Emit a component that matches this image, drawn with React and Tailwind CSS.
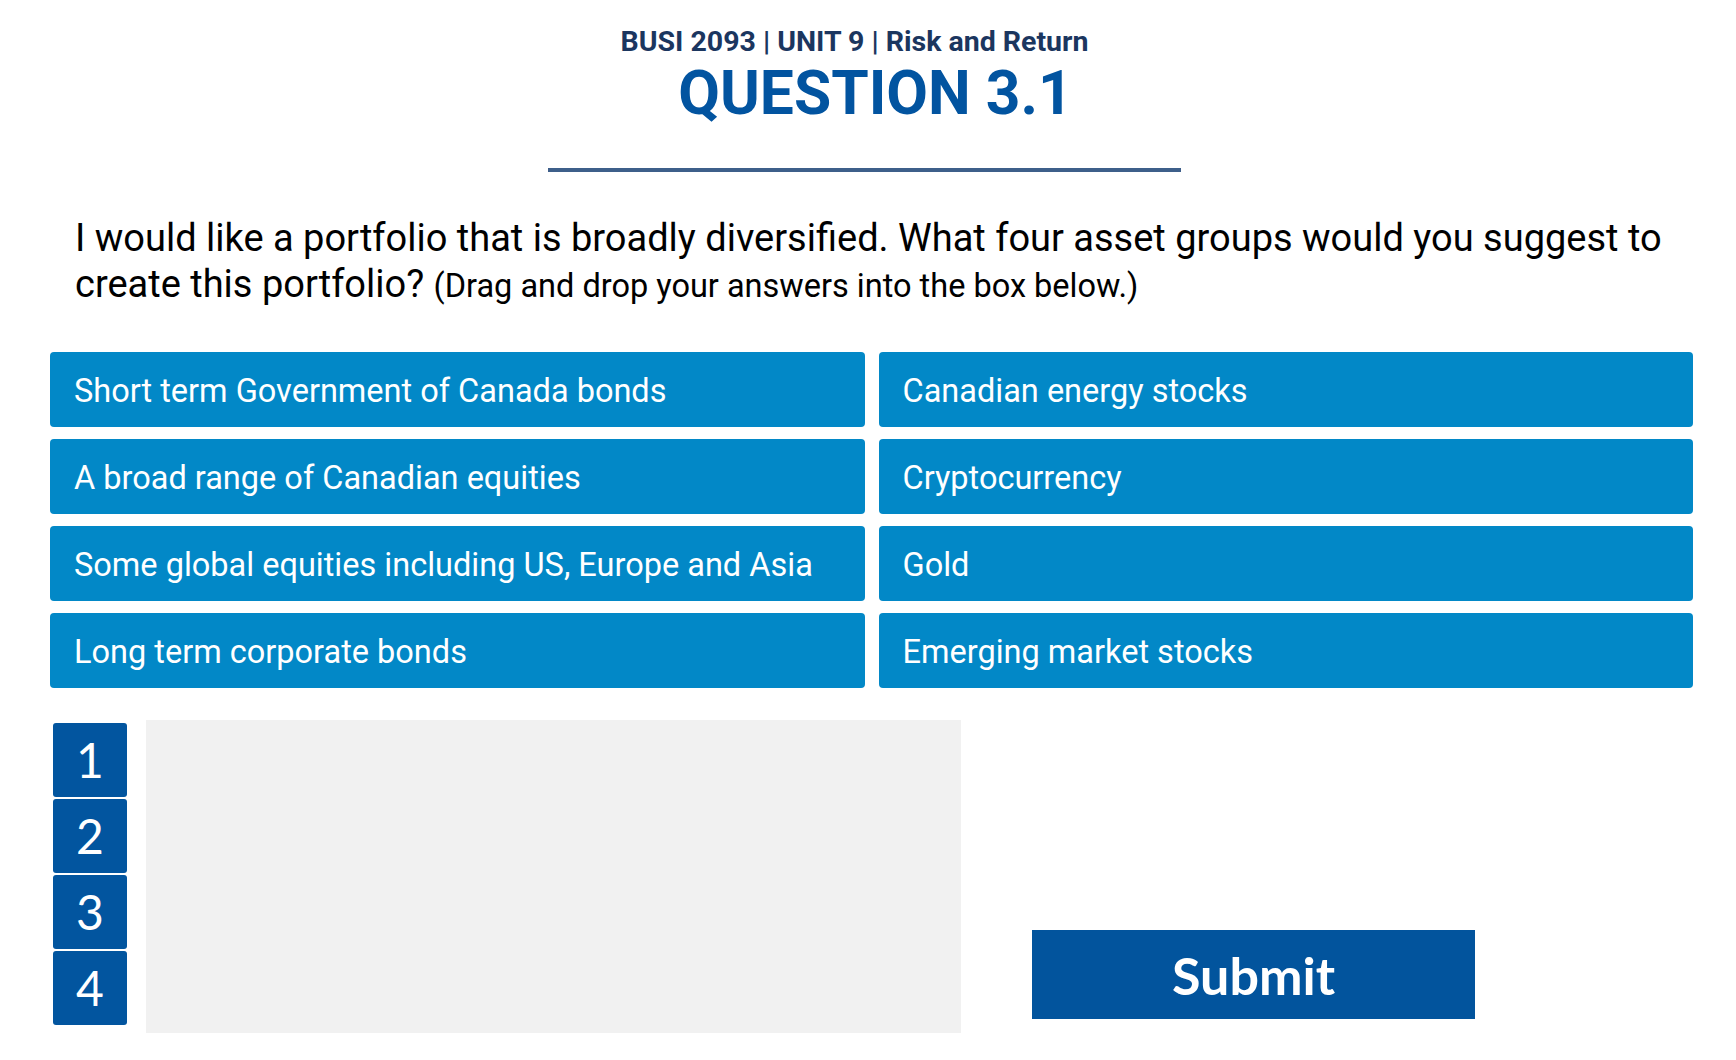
const answers = [
  'Short term Government of Canada bonds',
  'Canadian energy stocks',
  'A broad range of Canadian equities',
  'Cryptocurrency',
  'Some global equities including US, Europe and Asia',
  'Gold',
  'Long term corporate bonds',
  'Emerging market stocks',
]

export default function App() {
  return (
    <div className="bg-white min-h-screen w-[1736px] pl-[50px] pr-[43px]" style={{ fontFamily: 'Roboto, "Liberation Sans", sans-serif' }}>
      {/* Header */}
      <header className="flex flex-col items-center pt-[26px]">
        <div className="mr-[34px] text-[28.5px] leading-[32px] font-bold text-[#1b365f]">
          BUSI 2093 | UNIT 9 | Risk and Return
        </div>
        <h1 className="mt-[5px] ml-[8px] text-[60.5px] leading-[62px] font-bold text-[#0254a0]">
          QUESTION 3.1
        </h1>
        <div className="mt-[43px] mr-[14px] w-[633px] h-[4px] bg-[#3e5f8a]" />
      </header>

      {/* Question */}
      <p className="mt-[43px] ml-[25px] text-[38px] leading-[46px] text-black">
        I would like a portfolio that is broadly diversified. What four asset groups would you suggest to create this portfolio?{' '}
        <span className="text-[32.5px]">(Drag and drop your answers into the box below.)</span>
      </p>

      {/* Answer tiles */}
      <div className="mt-[43px] grid grid-cols-2 gap-x-[14px] gap-y-[12px]">
        {answers.map((a) => (
          <div key={a} className="h-[75px] flex items-center pl-[24px] pt-[4px] bg-[#0288c7] rounded-[4px] text-white text-[32.5px]">
            {a}
          </div>
        ))}
      </div>

      {/* Drop zone + submit */}
      <div className="mt-[32px] flex items-end">
        <div className="flex items-start">
          <div className="mt-[3px] ml-[3px] flex flex-col gap-[2px]" style={{ fontFamily: 'Lato, "Liberation Sans", sans-serif' }}>
            {[1, 2, 3, 4].map((n) => (
              <div key={n} className="w-[74px] h-[74px] flex items-center justify-center bg-[#02559f] rounded-[3px] text-white text-[48px]">
                {n}
              </div>
            ))}
          </div>
          <div className="ml-[19px] w-[815px] h-[313px] bg-[#f1f1f1]" />
        </div>
        <button
          className="ml-[71px] mb-[14px] w-[443px] h-[89px] flex items-center justify-center bg-[#02549d] text-white text-[52px] font-bold"
          style={{ fontFamily: 'Lato, "Liberation Sans", sans-serif' }}
        >
          Submit
        </button>
      </div>
    </div>
  )
}
